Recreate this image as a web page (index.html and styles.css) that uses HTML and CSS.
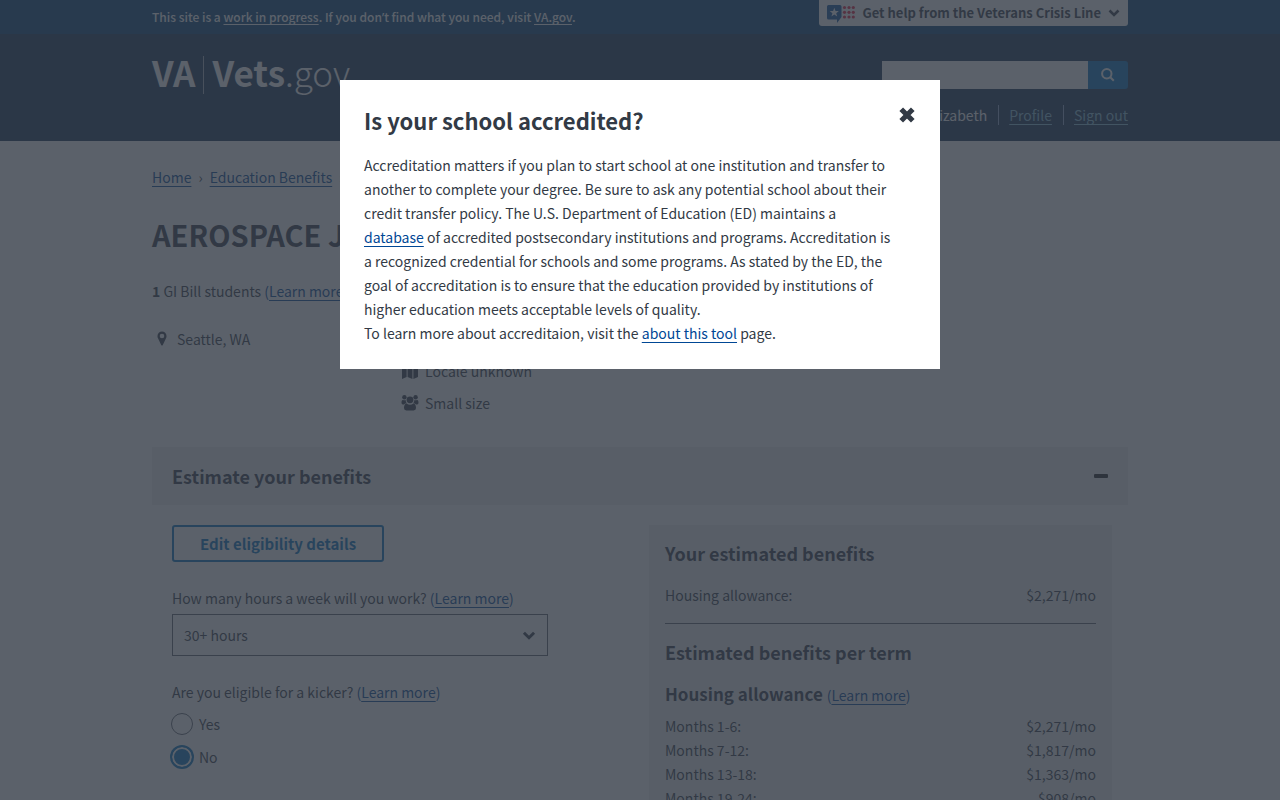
FILE: index.html
```html
<!DOCTYPE html>
<html lang="en">
<head>
<meta charset="utf-8">
<meta name="viewport" content="width=device-width, initial-scale=1">
<title>GI Bill Comparison Tool | Vets.gov</title>
<link rel="stylesheet" href="styles.css">
</head>
<body>
<div class="notice">
  <div class="container notice-row">
    <p class="notice-text">This site is a <a href="#">work in progress</a>. If you don<span class="apostrophe">’</span>t find what you need, visit <a href="#">VA.gov</a>.</p>
    <button class="crisis" type="button">
      <svg class="crisis-logo" viewBox="0 0 28 20" aria-hidden="true">
        <path fill="#0b4f9c" d="M1.500 2h11.500q1.500 0 1.500 1.500V14L10 20V16.500H1.500Q0 16.500 0 15V3.500Q0 2 1.500 2z"/>
        <path fill="#fff" d="m7.300 4.800 1.200 3.200 3.400.1-2.700 2.100 1 3.300-2.900-1.900-2.900 1.900 1-3.300-2.700-2.100 3.400-.1z"/>
        <g fill="#e31c3d"><circle cx="17.500" cy="4.500" r="1.600"/><circle cx="22" cy="4.500" r="1.600"/><circle cx="26.300" cy="4.500" r="1.600"/><circle cx="17.500" cy="9.300" r="1.600"/><circle cx="22" cy="9.300" r="1.600"/><circle cx="26.300" cy="9.300" r="1.600"/><circle cx="17.500" cy="14" r="1.600"/><circle cx="22" cy="14" r="1.600"/><circle cx="26.300" cy="14" r="1.600"/></g>
      </svg>
      <span>Get help from the Veterans Crisis Line</span>
      <svg class="chevron" viewBox="0 0 12 8" aria-hidden="true"><path d="m1.500 1.500 4.500 4.500 4.500-4.500"/></svg>
    </button>
  </div>
</div>
<header class="header">
  <div class="container header-row">
    <a class="logo" href="#"><span class="logo-va">VA</span><span class="logo-line"></span><span class="logo-vets">Vets</span><span class="logo-gov">.gov</span></a>
    <div class="header-side">
      <form class="search">
        <input type="search" aria-label="Search">
        <button type="button" aria-label="Submit search"><svg viewBox="0 0 14 14" aria-hidden="true"><circle cx="5.800" cy="5.800" r="4.700"/><path d="m9.300 9.300 3.500 3.500"/></svg></button>
      </form>
      <ul class="user-nav">
        <li>Elizabeth</li>
        <li><a href="#">Profile</a></li>
        <li><a href="#">Sign out</a></li>
      </ul>
    </div>
  </div>
</header>
<main class="container">
  <nav class="crumbs" aria-label="Breadcrumb">
    <a href="#">Home</a><span>›</span><a href="#">Education Benefits</a><span>›</span><a href="#">GI Bill® Comparison Tool</a><span>›</span><strong>AEROSPACE JOINT APPRENTICESHIP COMMITTEE</strong>
  </nav>
  <h1 class="title">AEROSPACE JOINT APPRENTICESHIP COMMITTEE</h1>
  <p class="students"><strong>1</strong> GI Bill students <span class="learn">(<a href="#">Learn more</a>)</span></p>
  <div class="facts">
    <ul>
      <li><svg viewBox="0 0 18 18" aria-hidden="true"><path fill-rule="evenodd" d="M9 1.500A4.500 4.500 0 0 0 4.500 6c0 1 .1 1.500.5 2.200l3.200 6.800q.8 1.200 1.600 0L13 8.200c.4-.7.5-1.200.5-2.200A4.500 4.500 0 0 0 9 1.500zm0 2.200a2.300 2.300 0 1 1 0 4.600 2.300 2.300 0 0 1 0-4.600z"/></svg>Seattle, WA</li>
    </ul>
    <ul>
      <li><svg viewBox="0 0 18 18" aria-hidden="true"><path d="M4 3h10v2h2v11H2V5h2z"/></svg>On The Job Training</li>
      <li><svg viewBox="0 0 18 18" aria-hidden="true"><path d="M1 3.500 5.600 1.500v13.500L1 17zM6.600 1.500l4.800 2V17l-4.800-2zM12.400 3.500 17 1.500V15l-4.600 2z"/></svg>Locale unknown</li>
      <li><svg viewBox="0 0 18 18" aria-hidden="true"><circle cx="3.400" cy="3.300" r="2.200"/><circle cx="14.600" cy="3.300" r="2.200"/><circle cx="9" cy="5.800" r="3.400"/><path d="M.5 8.800C.5 7 1 5.700 2 5.900c1 .6 1.800.5 2.700.2 0 1.400.3 2.300 1 3.200-1.100 0-2 .4-2.700 1.200H1.800Q.5 10.300.5 8.800zM17.500 8.800c0-1.800-.5-3.100-1.500-2.900-1 .6-1.800.5-2.700.2 0 1.400-.3 2.300-1 3.200 1.100 0 2 .4 2.700 1.200h1.200q1.300-.2 1.300-1.700zM5.500 9.500q3.500 2.500 7 0c1.800.2 2.500 2.200 2.500 4.600q0 2.400-2.300 2.400H5.300Q3 16.500 3 14.100c0-2.400.7-4.400 2.500-4.600z"/></svg>Small size</li>
    </ul>
  </div>
  <section>
    <button class="accordion" type="button" aria-expanded="true"><span>Estimate your benefits</span><i class="minus"></i></button>
    <div class="panel">
      <form class="inputs">
        <button class="edit" type="button">Edit eligibility details</button>
        <div class="field">
          <p class="question"><label for="hours">How many hours a week will you work?</label> <span class="learn">(<a href="#">Learn more</a>)</span></p>
          <div class="select">
            <select id="hours"><option>30+ hours</option></select>
            <svg class="chevron" viewBox="0 0 12 8" aria-hidden="true"><path d="m1.500 1.500 4.500 4.500 4.500-4.500"/></svg>
          </div>
        </div>
        <fieldset class="field">
          <legend class="question">Are you eligible for a kicker? <span class="learn">(<a href="#">Learn more</a>)</span></legend>
          <div class="choices">
            <label class="radio"><input type="radio" name="kicker"><span>Yes</span></label>
            <label class="radio"><input type="radio" name="kicker" checked><span>No</span></label>
          </div>
        </fieldset>
      </form>
      <div class="results">
        <h2>Your estimated benefits</h2>
        <dl><div><dt>Housing allowance:</dt><dd>$2,271/mo</dd></div></dl>
        <hr>
        <h2>Estimated benefits per term</h2>
        <h3>Housing allowance <span class="learn">(<a href="#">Learn more</a>)</span></h3>
        <dl>
          <div><dt>Months 1-6:</dt><dd>$2,271/mo</dd></div>
          <div><dt>Months 7-12:</dt><dd>$1,817/mo</dd></div>
          <div><dt>Months 13-18:</dt><dd>$1,363/mo</dd></div>
          <div><dt>Months 19-24:</dt><dd>$908/mo</dd></div>
        </dl>
      </div>
    </div>
  </section>
</main>
<div class="overlay">
  <div class="modal" role="dialog" aria-modal="true" aria-labelledby="modal-title">
    <div class="modal-head">
      <h2 id="modal-title">Is your school accredited?</h2>
      <button class="close" type="button" aria-label="Close"><svg viewBox="0 0 14 14" aria-hidden="true"><path d="m2.500 2.500 9 9m0-9-9 9"/></svg></button>
    </div>
    <div class="modal-body">
      <p>Accreditation matters if you plan to start school at one institution and transfer to another to complete your degree. Be sure to ask any potential school about their credit transfer policy. The U.S. Department of Education (ED) maintains a <a href="#">database</a> of accredited postsecondary institutions and programs. Accreditation is a recognized credential for schools and some programs. As stated by the ED, the goal of accreditation is to ensure that the education provided by institutions of higher education meets acceptable levels of quality.</p>
      <p>To learn more about accreditaion, visit the <a href="#">about this tool</a> page.</p>
    </div>
  </div>
</div>
</body>
</html>
```
FILE: styles.css
```css
* { box-sizing: border-box; }
body {
  margin: 0;
  overflow: hidden;
  height: 100vh;
  color: #323a45;
  background: #fff;
  font: 14px/24px "Noto Sans CJK SC", "Noto Sans", sans-serif;
}
h1, h2, h3, p, ul, dl, dd { margin: 0; padding: 0; }
ul { list-style: none; }
button, input, select { font: inherit; color: inherit; margin: 0; }
a { color: #004795; text-underline-offset: 3px; text-decoration-thickness: 1px; text-decoration-skip-ink: none; }
.learn { color: #004795; }
.container { width: calc(100% - 32px); max-width: 976px; margin: 0 auto; }

.notice { background: #003e73; color: #fff; font-size: 12px; font-weight: 500; }
.notice-row { display: flex; justify-content: space-between; align-items: flex-start; height: 34px; }
.notice-text { line-height: 34px; }
.notice a { color: inherit; text-underline-offset: 2px; }
.apostrophe { font-family: "Noto Sans", sans-serif; }
.crisis {
  display: flex; align-items: center; gap: 7px;
  height: 26px; padding: 0 8px;
  border: 0; border-radius: 0 0 3px 3px;
  background: #fff; color: #323a45; font-size: 13px; font-weight: 700; line-height: 24px;
}
.crisis-logo { width: 28px; height: 20px; }
.chevron { width: 12px; height: 8px; fill: none; stroke: #323a45; stroke-width: 2.600; }

.header { background: #112e51; color: #fff; }
.header-row { display: flex; justify-content: space-between; align-items: flex-start; padding: 22px 0 16px; }
.logo { display: flex; align-items: flex-start; color: #fff; text-decoration: none; font-size: 35px; line-height: 32px; }
.logo-line { width: 1px; height: 38px; margin: 0 8px; background: #fff; opacity: .6; }
.logo-va, .logo-vets { font-weight: 700; }
.logo-gov { font-weight: 300; }
.header-side { width: 246px; padding-top: 5px; }
.search { display: flex; height: 28px; }
.search input { flex: 1; min-width: 0; border: 0; border-radius: 0; background: #fff; }
.search button { display: grid; place-items: center; width: 40px; padding: 0; border: 0; border-radius: 0 3px 3px 0; background: #0071bc; }
.search svg { width: 14px; height: 14px; fill: none; stroke: #fff; stroke-width: 2; }
.user-nav { display: flex; justify-content: flex-end; align-items: center; padding-top: 16px; line-height: 20px; }
.user-nav li + li { margin-left: 11px; padding-left: 10px; border-left: 1px solid #8ba6ca; }
.user-nav a { color: #82bcd6; }

.crumbs { display: flex; padding-top: 24px; white-space: nowrap; }
.crumbs span { padding: 0 7px; }
.crumbs strong { color: #112e51; }
.title { margin-top: 23px; font-size: 29px; line-height: 44px; }
.students { margin-top: 23px; }
.facts { display: grid; grid-template-columns: 249px 1fr; margin-top: 24px; }
.facts li { display: flex; align-items: center; gap: 6px; margin-bottom: 8px; }
.facts svg { width: 18px; height: 18px; fill: #323a45; }
.facts ul:first-child { padding-left: 1px; }

.accordion {
  display: flex; justify-content: space-between; align-items: center;
  width: 100%; height: 58px; margin-top: 24px; padding: 0 20px;
  border: 0; background: #f1f1f1; font-size: 18px; font-weight: 700; text-align: left;
}
.minus { width: 14px; height: 4px; border-radius: 1px; background: #212121; }
.panel { display: grid; grid-template-columns: 376px 463px; justify-content: space-between; padding: 20px 16px 20px 20px; }
.edit { height: 37px; padding: 0 26px; border: 2px solid #0071bc; border-radius: 3px; background: transparent; color: #0071bc; font-size: 15px; font-weight: 700; line-height: 32px; }
.field { margin: 24px 0 0; padding: 0; border: 0; }
.question { padding: 0; }
.select { display: grid; grid-template-columns: 1fr auto; align-items: center; margin-top: 4px; border: 1px solid #5b616b; }
.select select { grid-area: 1 / 1 / 2 / 3; height: 40px; padding: 0 11px; border: 0; appearance: none; background: transparent; }
.select .chevron { grid-area: 1 / 2; width: 14px; height: 9px; margin-right: 11px; pointer-events: none; }
.choices { padding-top: 3px; }
.radio { display: flex; align-items: center; gap: 6px; height: 33px; }
.radio input { appearance: none; width: 22px; height: 22px; margin: 0 0 0 -1px; border: 1px solid #5b616b; border-radius: 50%; background: #fff; }
.radio input:checked { border-color: #0071bc; background: #0071bc; box-shadow: 0 0 0 1px #0071bc, inset 0 0 0 2px #fff; }

.results { height: 640px; padding: 14px 16px; background: #f1f1f1; }
.results h2 { font-size: 18px; line-height: 28px; }
.results dl { margin-top: 16px; }
.results dl div { display: flex; justify-content: space-between; }
.results hr { margin: 16px 0 14px; border: 0; border-top: 1px solid #5b616b; }
.results h3 { margin-top: 16px; font-size: 17px; line-height: 24px; }
.results h3 .learn { font-size: 14px; font-weight: 400; }
.results h3 + dl { margin-top: 7px; }

.overlay { position: fixed; inset: 0; display: flex; justify-content: center; align-items: flex-start; padding: 80px 16px; background: rgba(50, 58, 69, .8); }
.modal { width: 100%; max-width: 600px; padding: 24px; background: #fff; }
.modal-head { display: flex; justify-content: space-between; align-items: flex-start; margin-bottom: 17px; }
.modal-head h2 { font-size: 22px; line-height: 32px; }
.modal-body { max-width: 532px; }
.close { display: grid; place-items: center; width: 18px; height: 22px; padding: 0; border: 0; background: transparent; }
.close svg { width: 18px; height: 18px; stroke: #323a45; stroke-width: 4; }
```
